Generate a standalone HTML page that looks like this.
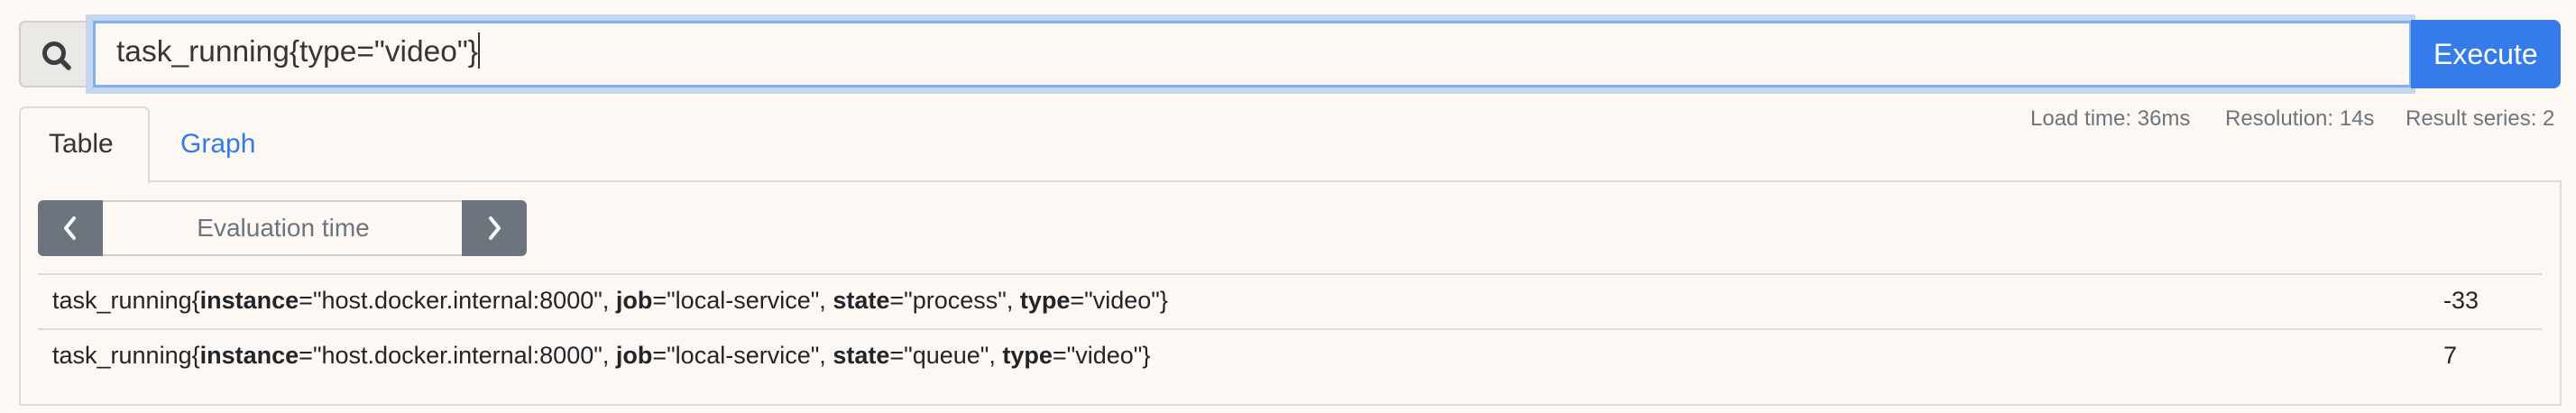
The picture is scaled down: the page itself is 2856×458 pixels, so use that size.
<!DOCTYPE html>
<html><head><meta charset="utf-8"><style>
*{box-sizing:border-box;margin:0;padding:0}
body{width:2856px;height:458px;background:#fdf8f3;font-family:"Liberation Sans",Arial,sans-serif;position:relative;overflow:hidden;color:#212529}
.abs{position:absolute}
.addon{left:21px;top:23px;width:82px;height:74px;background:#ebe9e6;border:2px solid #d2d0ce;border-right:none;border-radius:7px 0 0 7px}
.glow{left:95px;top:16px;width:2583px;height:88px;background:#c6d6f1}
.input{left:103px;top:23px;width:2571px;height:74px;background:#fdf8f3;border:3px solid #80b0ee}
.q{left:129px;top:36px;font-size:33.5px;color:#353535;line-height:44px;white-space:nowrap}
.caret{display:inline-block;width:2px;height:40px;background:#333;vertical-align:-8px}
.exec{left:2673px;top:22px;width:166px;height:76px;background:#357bea;border-radius:0 8px 8px 0;color:#fff;font-size:32px;line-height:76px;padding-left:25px}
.stats{top:118px;font-size:24px;color:#6c757d;white-space:nowrap}
.tab{left:21px;top:118px;width:145px;height:85px;border:2px solid #dedcda;border-bottom:none;border-radius:7px 7px 0 0;background:#fdf8f3}
.tabline{left:165px;top:200px;width:2675px;height:2px;background:#dedcda}
.panel{left:21px;top:200px;width:2819px;height:250px;border:2px solid #dedcda;border-top:none}
.t1{left:54px;top:143px;font-size:30px;color:#333}
.t2{left:200px;top:143px;font-size:30px;color:#2f7bea}
.btn{top:222px;width:72px;height:62px;background:#6c757d;color:#fff}
.mid{left:114px;top:222px;width:400px;height:62px;border-top:2px solid #d0cfcd;border-bottom:2px solid #d0cfcd;text-align:center;font-size:28px;line-height:58px;color:#6c757d}
.hr{left:42px;width:2776px;height:2px;background:#dddbd9}
.row{left:58px;font-size:27px;color:#212529;white-space:nowrap}
.val{left:2709px;font-size:27px}
</style></head><body>
<div class="abs addon"><svg class="abs" style="left:20px;top:13px" width="44" height="44" viewBox="0 0 44 44"><circle cx="17" cy="21" r="10.5" fill="none" stroke="#3b3d40" stroke-width="5"/><line x1="25" y1="29" x2="33" y2="37" stroke="#3b3d40" stroke-width="5.5" stroke-linecap="round"/></svg></div>
<div class="abs glow"></div>
<div class="abs input"></div>
<div class="abs q">task_running{type="video"}<span class="caret"></span></div>
<div class="abs exec">Execute</div>
<div class="abs stats" style="left:2251px">Load time: 36ms</div>
<div class="abs stats" style="left:2467px">Resolution: 14s</div>
<div class="abs stats" style="left:2667px">Result series: 2</div>
<div class="abs panel"></div>
<div class="abs tabline"></div>
<div class="abs tab"></div>
<div class="abs t1">Table</div>
<div class="abs t2">Graph</div>
<div class="abs btn" style="left:42px;border-radius:6px 0 0 6px"><svg width="72" height="62"><path d="M40 20 L31 31 L40 42" fill="none" stroke="#fff" stroke-width="4" stroke-linecap="round" stroke-linejoin="round"/></svg></div>
<div class="abs mid">Evaluation time</div>
<div class="abs btn" style="left:512px;border-radius:0 6px 6px 0"><svg width="72" height="62"><path d="M32 20 L41 31 L32 42" fill="none" stroke="#fff" stroke-width="4" stroke-linecap="round" stroke-linejoin="round"/></svg></div>
<div class="abs hr" style="top:303px"></div>
<div class="abs hr" style="top:364px"></div>
<div class="abs row" style="top:318px">task_running{<b>instance</b>="host.docker.internal:8000", <b>job</b>="local-service", <b>state</b>="process", <b>type</b>="video"}</div>
<div class="abs val" style="top:318px">-33</div>
<div class="abs row" style="top:379px">task_running{<b>instance</b>="host.docker.internal:8000", <b>job</b>="local-service", <b>state</b>="queue", <b>type</b>="video"}</div>
<div class="abs val" style="top:379px">7</div>
</body></html>
